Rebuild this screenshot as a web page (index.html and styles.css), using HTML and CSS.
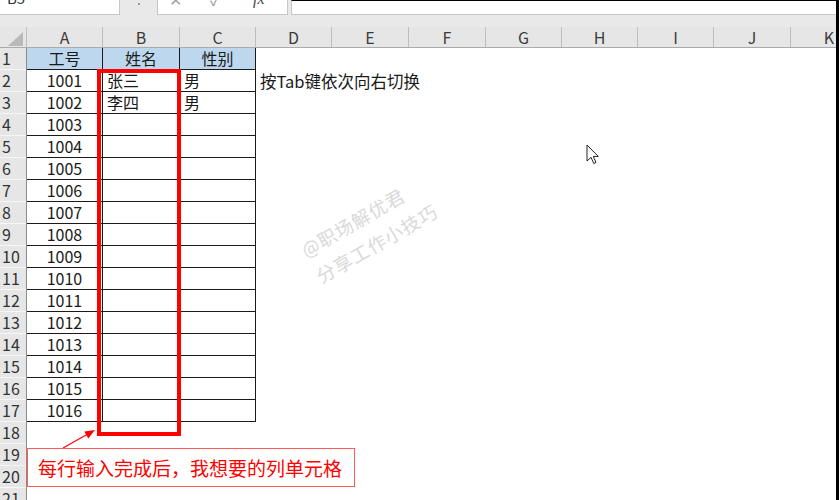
FILE: index.html
```html
<!DOCTYPE html>
<html lang="zh-CN">
<head>
  <meta charset="UTF-8" />
  <title>工号表 - Excel</title>
  <link rel="stylesheet" href="styles.css">
</head>
<body>
<div class="app">

  <!-- Formula bar -->
  <div class="formula-bar">
    <div class="name-box"><span>B5</span></div>
    <div class="grip"><span class="grip-dot"></span></div>
    <div class="fx-box">
      <span class="fx-cancel">✕</span>
      <span class="fx-enter">✓</span>
      <span class="fx-func">fx</span>
    </div>
    <div class="fx-input"></div>
  </div>
  <div class="bar-gap"></div>

  <!-- Column headers -->
  <div class="col-heads">
    <div class="corner"><span class="corner-tri"></span></div>
    <div class="col-head w76">A</div>
    <div class="col-head w77">B</div>
    <div class="col-head w76">C</div>
    <div class="col-head w76">D</div>
    <div class="col-head w77">E</div>
    <div class="col-head w77">F</div>
    <div class="col-head w76">G</div>
    <div class="col-head w76">H</div>
    <div class="col-head w76">I</div>
    <div class="col-head w77">J</div>
    <div class="col-head w77">K</div>
  </div>

  <!-- Sheet -->
  <div class="sheet">
    <div class="row-heads">
      <div class="row-head">1</div>
      <div class="row-head">2</div>
      <div class="row-head">3</div>
      <div class="row-head">4</div>
      <div class="row-head">5</div>
      <div class="row-head">6</div>
      <div class="row-head">7</div>
      <div class="row-head">8</div>
      <div class="row-head">9</div>
      <div class="row-head">10</div>
      <div class="row-head">11</div>
      <div class="row-head">12</div>
      <div class="row-head">13</div>
      <div class="row-head">14</div>
      <div class="row-head">15</div>
      <div class="row-head">16</div>
      <div class="row-head">17</div>
      <div class="row-head">18</div>
      <div class="row-head">19</div>
      <div class="row-head">20</div>
      <div class="row-head">21</div>
    </div>

    <div class="data">
      <div class="cell title">工号</div><div class="cell title">姓名</div><div class="cell title">性别</div>
      <div class="cell num">1001</div><div class="cell">张三</div><div class="cell">男</div>
      <div class="cell num">1002</div><div class="cell">李四</div><div class="cell">男</div>
      <div class="cell num">1003</div><div class="cell"></div><div class="cell"></div>
      <div class="cell num">1004</div><div class="cell"></div><div class="cell"></div>
      <div class="cell num">1005</div><div class="cell"></div><div class="cell"></div>
      <div class="cell num">1006</div><div class="cell"></div><div class="cell"></div>
      <div class="cell num">1007</div><div class="cell"></div><div class="cell"></div>
      <div class="cell num">1008</div><div class="cell"></div><div class="cell"></div>
      <div class="cell num">1009</div><div class="cell"></div><div class="cell"></div>
      <div class="cell num">1010</div><div class="cell"></div><div class="cell"></div>
      <div class="cell num">1011</div><div class="cell"></div><div class="cell"></div>
      <div class="cell num">1012</div><div class="cell"></div><div class="cell"></div>
      <div class="cell num">1013</div><div class="cell"></div><div class="cell"></div>
      <div class="cell num">1014</div><div class="cell"></div><div class="cell"></div>
      <div class="cell num">1015</div><div class="cell"></div><div class="cell"></div>
      <div class="cell num">1016</div><div class="cell"></div><div class="cell"></div>
    </div>

    <div class="side">
      <div class="side-note">按Tab键依次向右切换</div>
    </div>
  </div>

  <!-- Highlight around column B -->
  <div class="pick"></div>

  <!-- Callout with arrow -->
  <svg class="arrow" width="40" height="28" viewBox="0 0 40 28">
    <line x1="3" y1="22" x2="27" y2="8.5" stroke="#ff0000" stroke-width="1.2"/>
    <polygon points="35,4 28.3,12.4 24.3,5.4" fill="#ff0000"/>
  </svg>
  <div class="callout">每行输入完成后，我想要的列单元格</div>

  <!-- Watermark -->
  <div class="mark">@职场解优君<br>分享工作小技巧</div>

  <!-- Mouse pointer -->
  <svg class="pointer" width="14" height="21" viewBox="0 0 14 21">
    <path d="M1 1 L1 17 L5 13.3 L7.8 19.5 L10 18.5 L7.3 12.4 L12.3 12.4 Z" fill="#fff" stroke="#222" stroke-width="1" stroke-linejoin="round"/>
  </svg>

</div>
</body>
</html>
```

FILE: styles.css
```css
* {
  box-sizing: border-box;
  margin: 0;
  padding: 0;
}

body {
  width: 839px;
  height: 500px;
  overflow: hidden;
  background: #fff;
  font-family: "Noto Sans CJK SC", "Noto Sans", sans-serif;
  color: #1a1a1a;
}

.app {
  position: relative;
  width: 839px;
  height: 500px;
  overflow: hidden;
  border-right: 3px solid #000;
  background: #fff;
}

/* formula bar */
.formula-bar {
  display: flex;
  height: 15px;
  background: #e9e9e9;
}

.name-box {
  width: 120px;
  background: #fff;
  border-right: 1px solid #c6c6c6;
  border-bottom: 1px solid #c6c6c6;
  overflow: hidden;
  padding-left: 7px;
  font-size: 15px;
  color: #333;
}

.name-box span {
  display: block;
  line-height: 15px;
  margin-top: -10px;
}

.grip {
  width: 37px;
  display: flex;
  justify-content: center;
}

.grip-dot {
  width: 2px;
  height: 2px;
  margin-top: 3px;
  background: #9a9a9a;
}

.fx-box {
  width: 131px;
  display: flex;
  background: #fff;
  border: 1px solid #c6c6c6;
  border-top: none;
  overflow: hidden;
  font-size: 16px;
  line-height: 16px;
  color: #a0a0a0;
}

.fx-box span {
  margin-top: -9px;
}

.fx-cancel {
  margin-left: 11px;
}

.fx-enter {
  margin-left: 28px;
}

.fx-func {
  margin-left: 32px;
  font-family: "Liberation Serif", serif;
  font-style: italic;
  color: #444;
}

.fx-input {
  flex: 1;
  margin-left: 3px;
  background: #fff;
  border-top: 1px solid #000;
  border-left: 1px solid #c6c6c6;
  border-bottom: 1px solid #c6c6c6;
}

.bar-gap {
  height: 12px;
  background: #e9e9e9;
}

/* column headers */
.col-heads {
  display: flex;
  height: 21px;
  background: #e6e6e6;
  border-bottom: 1px solid #ababab;
}

.corner {
  flex: none;
  width: 27px;
  display: flex;
  justify-content: flex-end;
  align-items: flex-end;
  padding: 0 3px 1px 0;
  border-right: 1px solid #bdbdbd;
}

.corner-tri {
  width: 0;
  height: 0;
  border-left: 15px solid transparent;
  border-bottom: 14px solid #b9b9b9;
}

.col-head {
  flex: none;
  text-align: center;
  font-size: 16px;
  line-height: 20px;
  color: #3b3b3b;
  border-right: 1px solid #bdbdbd;
}

.w76 { width: 76px; }
.w77 { width: 77px; }

/* sheet body */
.sheet {
  display: flex;
  align-items: flex-start;
}

.row-heads {
  flex: none;
  width: 27px;
  background: #e6e6e6;
  border-right: 1px solid #8c8c8c;
}

.row-head {
  height: 22px;
  padding-left: 2px;
  font-size: 16px;
  line-height: 21px;
  color: #333;
  border-bottom: 1px solid #f6f6f6;
}

.data {
  display: grid;
  grid-template-columns: 76px 77px 76px;
  grid-auto-rows: 22px;
}

.cell {
  padding: 0 4px;
  font-size: 16px;
  line-height: 21px;
  white-space: nowrap;
  border-right: 1px solid #1a1a1a;
  border-bottom: 1px solid #1a1a1a;
}

.cell.num {
  text-align: center;
}

.cell.title {
  text-align: center;
  font-size: 16px;
  background: #bdd7ee;
}

.side {
  padding: 22px 0 0 4px;
}

.side-note {
  font-size: 16.5px;
  line-height: 22px;
  white-space: nowrap;
}

/* overlays */
.pick {
  position: absolute;
  left: 97px;
  top: 69px;
  width: 84px;
  height: 367px;
  border: 4px solid #ff0000;
}

.arrow {
  position: absolute;
  left: 60px;
  top: 426px;
}

.callout {
  position: absolute;
  left: 27px;
  top: 448px;
  width: 328px;
  height: 39px;
  padding-left: 10px;
  background: #fff;
  border: 1px solid #ff5a5a;
  color: #ff0000;
  font-size: 19px;
  line-height: 37px;
  white-space: nowrap;
}

.mark {
  position: absolute;
  left: 295px;
  top: 238px;
  transform: rotate(-30deg);
  transform-origin: 0 0;
  color: #d9d9d9;
  font-size: 18.5px;
  line-height: 30px;
  letter-spacing: 1px;
  white-space: nowrap;
}

.pointer {
  position: absolute;
  left: 586px;
  top: 144px;
}
```
